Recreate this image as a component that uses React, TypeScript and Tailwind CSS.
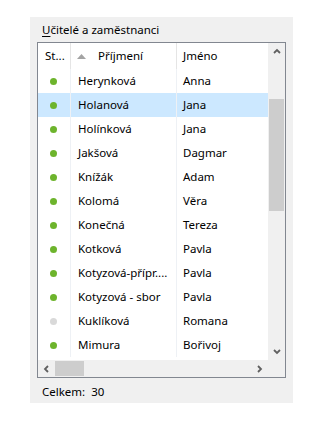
import React from "react";

type Person = { surname: string; name: string; active: boolean };

const PEOPLE: Person[] = [
  { surname: "Herynková", name: "Anna", active: true },
  { surname: "Holanová", name: "Jana", active: true },
  { surname: "Holínková", name: "Jana", active: true },
  { surname: "Jakšová", name: "Dagmar", active: true },
  { surname: "Knížák", name: "Adam", active: true },
  { surname: "Kolomá", name: "Věra", active: true },
  { surname: "Konečná", name: "Tereza", active: true },
  { surname: "Kotková", name: "Pavla", active: true },
  { surname: "Kotyzová-přípr....", name: "Pavla", active: true },
  { surname: "Kotyzová - sbor", name: "Pavla", active: true },
  { surname: "Kuklíková", name: "Romana", active: false },
  { surname: "Mimura", name: "Bořivoj", active: true },
];

const SELECTED = 1;

function Chevron({ dir }: { dir: "up" | "down" | "left" | "right" }) {
  const paths = {
    up: "M1 5 L4 2 L7 5",
    down: "M1 2 L4 5 L7 2",
    left: "M5 1 L2 4 L5 7",
    right: "M2 1 L5 4 L2 7",
  };
  return (
    <svg width="8" height="8" viewBox="0 0 8 8" className="block">
      <path d={paths[dir]} fill="none" stroke="#606060" strokeWidth="1.8" />
    </svg>
  );
}

export default function App() {
  return (
    <div
      className="w-[326px] h-[431px] bg-white pt-[17px] pl-[30px] text-[11.5px] text-black"
      style={{ fontFamily: '"Noto Sans", "Open Sans", sans-serif' }}
    >
      <div className="w-[263px] h-[386px] bg-[#f0f0f0] px-[7px] flex flex-col">
        {/* Title */}
        <div className="h-[25px] flex items-center pl-[5px]">
          <span>
            <span className="underline underline-offset-2">U</span>čitelé a zaměstnanci
          </span>
        </div>

        {/* List box */}
        <div className="h-[336px] border border-[#828790] bg-white grid grid-cols-[230px_17px] grid-rows-[317px_17px]">
          <div className="overflow-hidden flex flex-col">
            {/* Header */}
            <div className="h-[26px] shrink-0 flex">
              <div className="w-[33px] shrink-0 border-r border-[#e5e5e5] pl-[7px] flex items-center">
                St...
              </div>
              <div className="w-[106px] shrink-0 border-r border-[#e5e5e5] flex items-center pl-[6px]">
                <svg width="9" height="5" viewBox="0 0 9 5" className="mr-[12px]">
                  <path d="M0 5 L4.5 0 L9 5 Z" fill="#a3a3a3" />
                </svg>
                Příjmení
              </div>
              <div className="flex-1 pl-[6px] flex items-center">Jméno</div>
            </div>

            {PEOPLE.map((p, i) => (
              <div
                key={i}
                className={`h-[24px] shrink-0 flex ${i === SELECTED ? "bg-[#cce8ff]" : ""}`}
              >
                <div className="w-[33px] shrink-0 border-r border-[#eef1f5] flex items-center pl-[12px]">
                  <span
                    className={`w-[7px] h-[7px] rounded-full ${p.active ? "bg-[#6db42c]" : "bg-[#d9d9d9]"}`}
                  />
                </div>
                <div className="w-[106px] shrink-0 border-r border-[#eef1f5] flex items-center pl-[7px] whitespace-nowrap overflow-hidden">
                  {p.surname}
                </div>
                <div className="flex-1 flex items-center pl-[6px]">{p.name}</div>
              </div>
            ))}
          </div>

          {/* Vertical scrollbar */}
          <div className="bg-[#f0f0f0] flex flex-col">
            <div className="h-[17px] flex items-center justify-center">
              <Chevron dir="up" />
            </div>
            <div className="h-[39px]" />
            <div className="h-[112px] mx-px bg-[#cdcdcd]" />
            <div className="flex-1" />
            <div className="h-[17px] flex items-center justify-center">
              <Chevron dir="down" />
            </div>
          </div>

          {/* Horizontal scrollbar */}
          <div className="bg-[#f0f0f0] flex">
            <div className="w-[17px] flex items-center justify-center">
              <Chevron dir="left" />
            </div>
            <div className="w-[29px] my-px bg-[#cdcdcd]" />
            <div className="flex-1" />
            <div className="w-[17px] flex items-center justify-center">
              <Chevron dir="right" />
            </div>
          </div>
          <div className="bg-[#f0f0f0]" />
        </div>

        {/* Footer */}
        <div className="h-[25px] flex items-center pl-[5px] pt-[3px]">
          <span>Celkem:</span>
          <span className="ml-[6px]">30</span>
        </div>
      </div>
    </div>
  );
}
